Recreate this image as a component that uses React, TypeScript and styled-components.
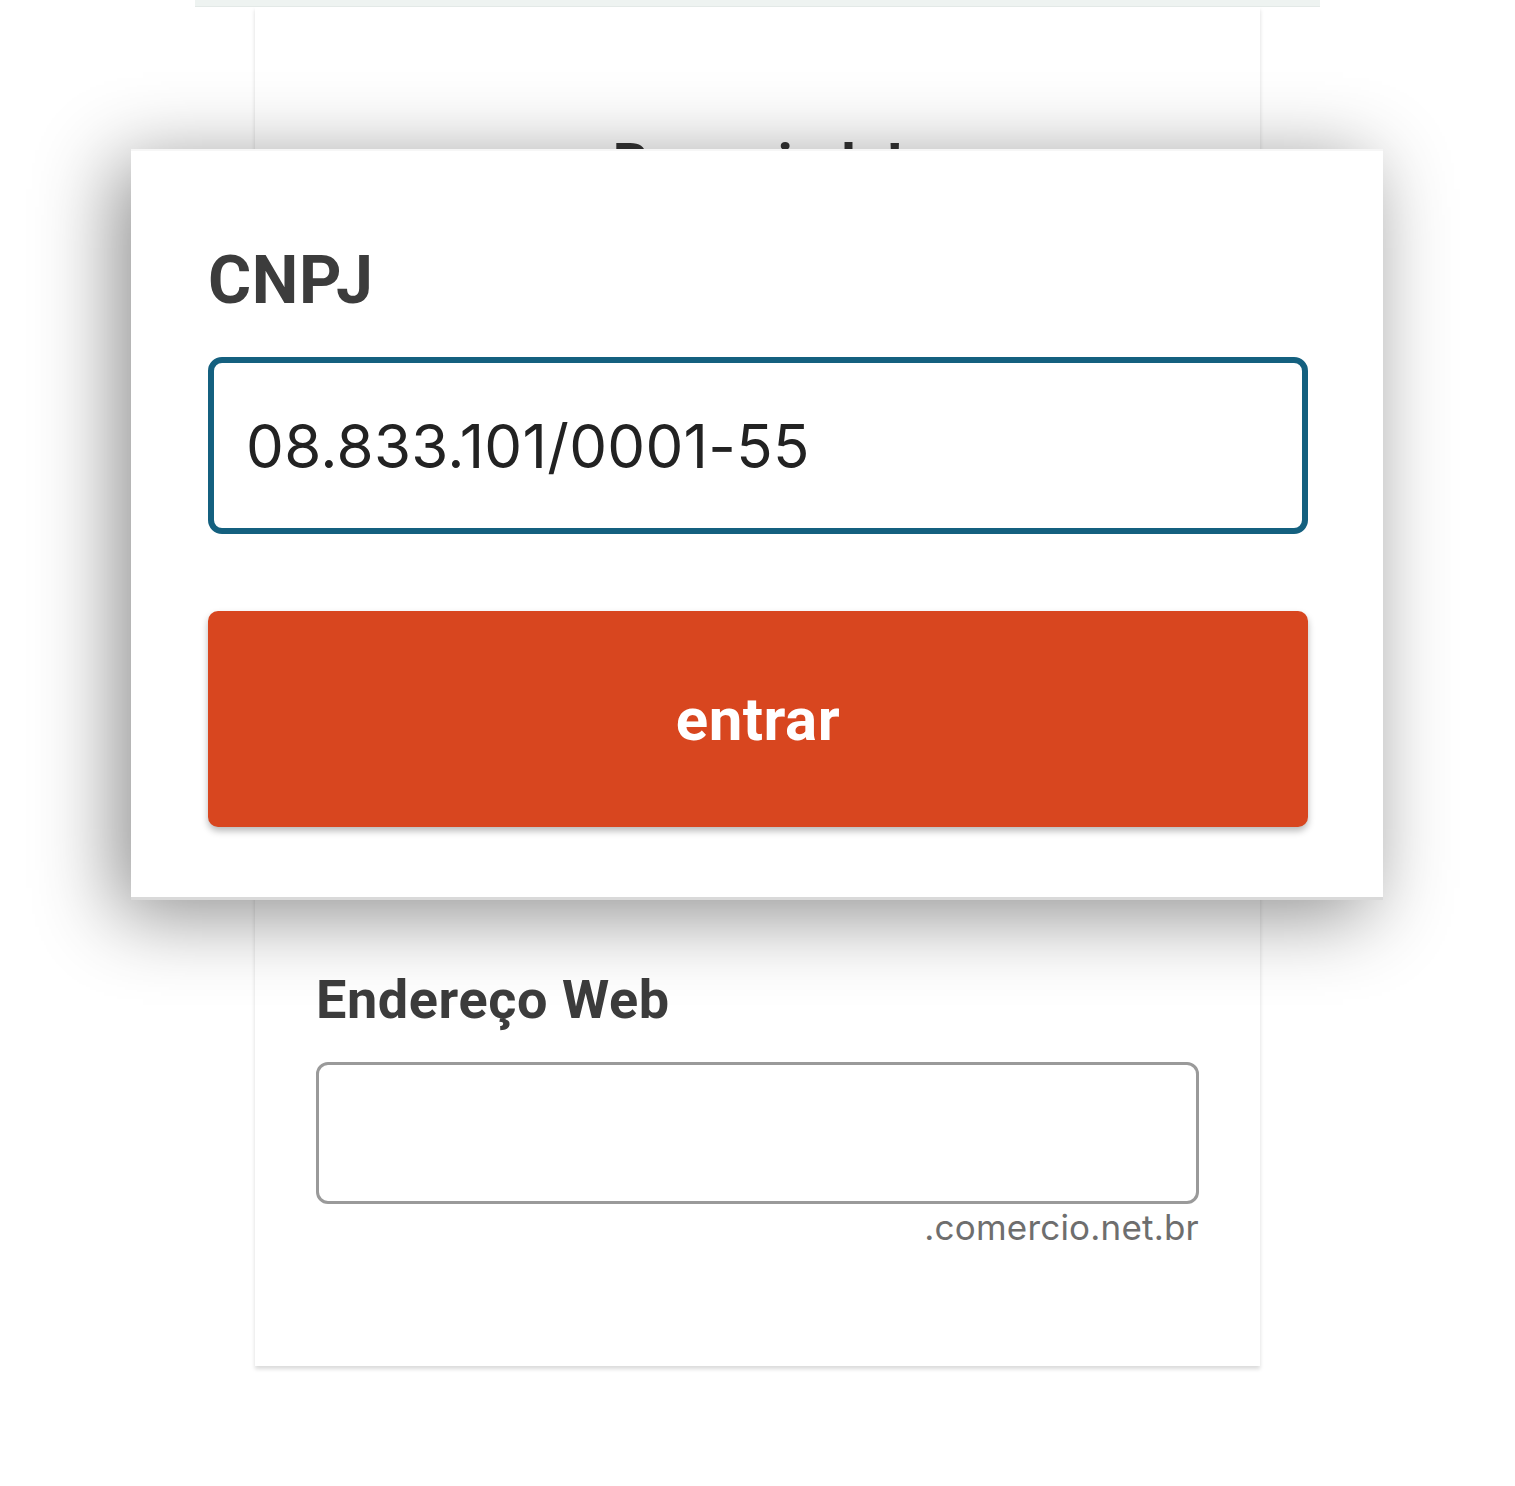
import React from "react";
import styled, { createGlobalStyle } from "styled-components";

const GlobalStyle = createGlobalStyle`
  html, body { margin: 0; padding: 0; background: #ffffff; }
  body { font-family: "Inter", "Roboto", sans-serif; }
  * { box-sizing: border-box; }
`;

const Stage = styled.div`
  position: relative;
  width: 1515px;
  height: 1486px;
  overflow: hidden;
  background: #ffffff;
`;

const TopBar = styled.div`
  position: relative;
  z-index: 1;
  margin-left: 195px;
  width: 1125px;
  height: 7px;
  background: #eef3f1;
  border-bottom: 1px solid #e3e9e7;
`;

const BackCard = styled.section`
  margin-left: 255px;
  width: 1005px;
  height: 1359px;
  padding: 129px 61px 0;
  background: #ffffff;
  box-shadow: 0 3px 4px rgba(0, 0, 0, 0.15);
  display: flex;
  flex-direction: column;
`;

const Heading = styled.h1`
  margin: 0;
  font-family: "Roboto", sans-serif;
  font-weight: 700;
  font-size: 56px;
  line-height: 1;
  color: #333333;
  text-align: center;
`;

const Label = styled.label<{ $size: number; $gap: number }>`
  display: block;
  margin-top: ${(p) => p.$gap}px;
  font-family: "Roboto", sans-serif;
  font-weight: 700;
  font-size: ${(p) => p.$size}px;
  line-height: 1;
  letter-spacing: 0.6px;
  color: #3c3c3c;
`;

const Field = styled.input<{ $height: number; $focus?: boolean; $size: number; $gap: number }>`
  display: block;
  width: 100%;
  height: ${(p) => p.$height}px;
  margin-top: ${(p) => p.$gap}px;
  padding: 0 ${(p) => Math.round(p.$size * 0.54)}px;
  border: ${(p) => (p.$focus ? `${Math.round(p.$size / 10)}px solid #14607f` : "3px solid #9a9a9a")};
  border-radius: ${(p) => (p.$focus ? 14 : 12)}px;
  background: #ffffff;
  font-family: "Inter", "Roboto", sans-serif;
  font-size: ${(p) => p.$size}px;
  letter-spacing: 0.3px;
  color: #222222;
  outline: none;
`;

const SubmitButton = styled.button<{ $height: number; $size: number; $gap: number }>`
  display: block;
  width: 100%;
  height: ${(p) => p.$height}px;
  margin-top: ${(p) => p.$gap}px;
  border: none;
  border-radius: 10px;
  background: #d8461f;
  color: #ffffff;
  font-family: "Roboto", sans-serif;
  font-weight: 700;
  font-size: ${(p) => p.$size}px;
  letter-spacing: 0.5px;
  box-shadow: 0 4px 7px rgba(0, 0, 0, 0.28);
  cursor: pointer;
`;

const DomainHint = styled.div`
  margin-top: 2px;
  text-align: right;
  font-family: "Inter", sans-serif;
  font-size: 35px;
  line-height: 1.2;
  letter-spacing: 0.2px;
  color: #6e6e6e;
`;

// enlarged view of the CNPJ step, floating over the form
const Magnifier = styled.div`
  position: absolute;
  left: 131px;
  top: 149px;
  width: 1252px;
  height: 751px;
  padding: 97px 75px 0 77px;
  background: #ffffff;
  border-top: 2px solid #f6f6f6;
  border-bottom: 3px solid #d9d9d9;
  box-shadow: -14px 14px 75px rgba(0, 0, 0, 0.45);
  display: flex;
  flex-direction: column;
`;

export default function App() {
  return (
    <Stage>
      <GlobalStyle />
      <TopBar />
      <BackCard>
        <Heading>Bem-vindo!</Heading>
        <Label $size={54} $gap={781}>Endereço Web</Label>
        <Field $height={142} $size={40} $gap={35} />
        <DomainHint>.comercio.net.br</DomainHint>
      </BackCard>
      <Magnifier>
        <Label $size={66} $gap={0}>CNPJ</Label>
        <Field $height={177} $size={60} $gap={43} $focus readOnly value="08.833.101/0001-55" />
        <SubmitButton $height={216} $size={60} $gap={77}>entrar</SubmitButton>
      </Magnifier>
    </Stage>
  );
}
